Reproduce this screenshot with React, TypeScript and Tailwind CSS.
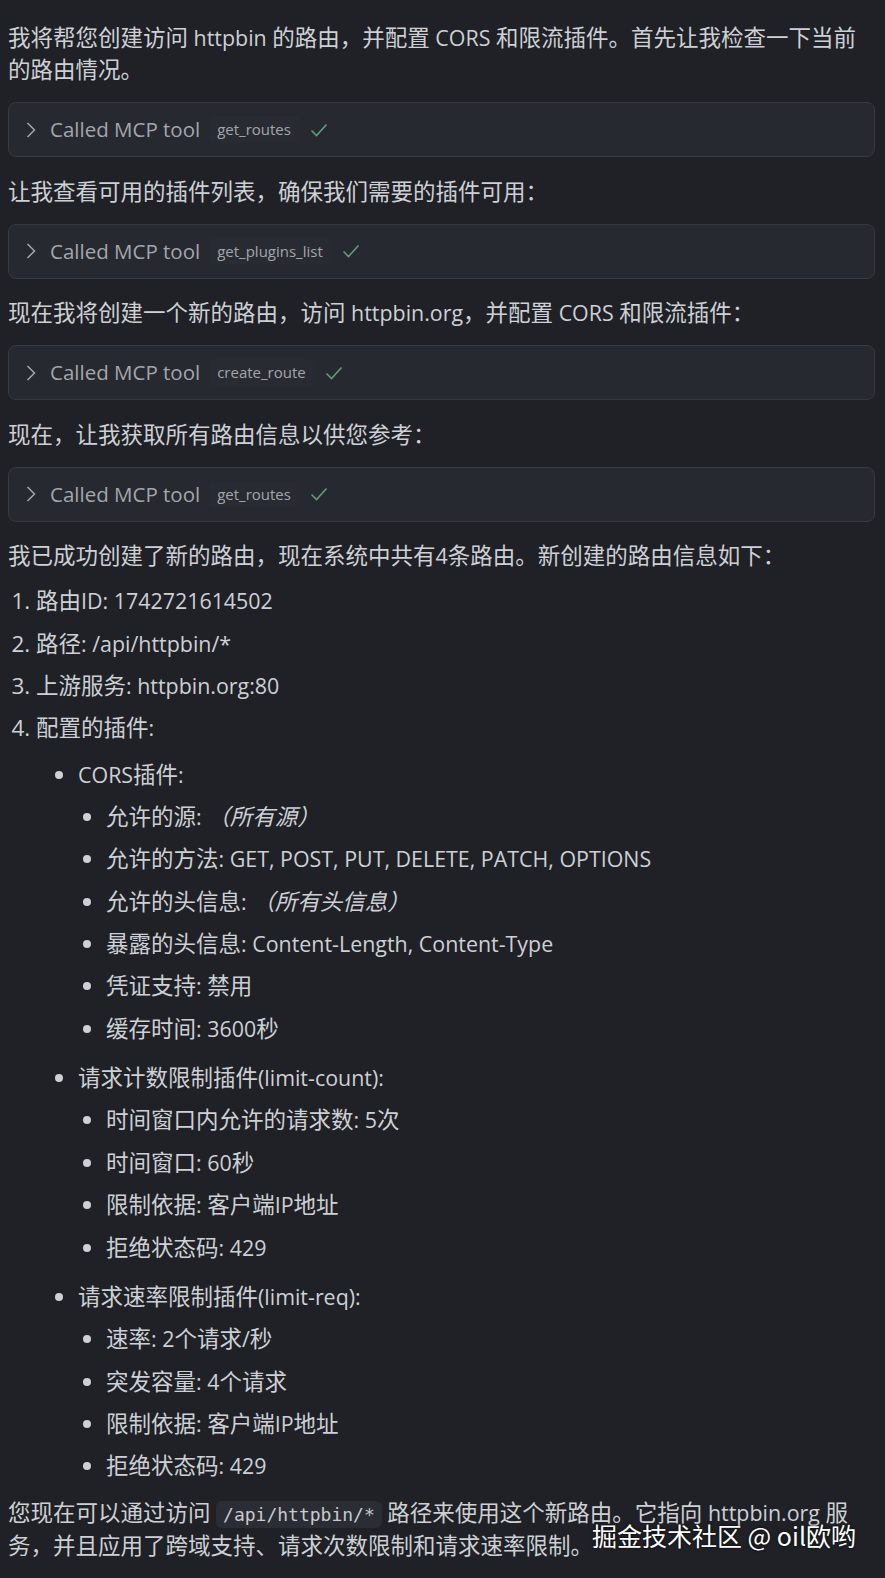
import React from "react";

const TEXT_FONT = {
  fontFamily: '"Open Sans", "Noto Sans CJK SC", sans-serif',
};

// Open Sans runs a little wider than the reference's Latin face, so Latin runs are set slightly smaller.
function mix(s: string) {
  return s.split(/([\u3000-\u303f\u4e00-\u9fff\uff00-\uffef]+)/).map((part, i) =>
    /[\u3000-\u303f\u4e00-\u9fff\uff00-\uffef]/.test(part) || part === "" ? (
      part
    ) : (
      <span key={i} className="text-[0.952em]">
        {part}
      </span>
    )
  );
}

function ToolCall({ name }: { name: string }) {
  return (
    <div className="mt-[16px] mb-[18.5px] flex h-[55px] items-center rounded-[8px] border border-[#363a42] bg-[#262930] pl-[15px]">
      <svg width="14" height="18" viewBox="0 0 14 18" className="mr-[12px]">
        <path d="M3.5 2 L10.5 9 L3.5 16" fill="none" stroke="#a3a6ab" strokeWidth="1.5" />
      </svg>
      <span className="text-[20.5px] text-[#a3a6ab]">Called MCP tool</span>
      <span className="ml-[9px] rounded-[4px] bg-[#282b32] px-[8px] py-[2px] text-[15px] text-[#a3a6ab]">
        {name}
      </span>
      <svg width="18" height="14" viewBox="0 0 18 14" className="ml-[11px]">
        <path d="M1.5 7.5 L6.5 12.5 L16.5 1.5" fill="none" stroke="#5d9c7c" strokeWidth="1.6" />
      </svg>
    </div>
  );
}

function Item({ children }: { children: React.ReactNode }) {
  return <li className="mt-[10.35px] leading-[32px]">{children}</li>;
}

export default function App() {
  return (
    <div
      className="relative min-h-[1578px] bg-[#1f2126] pt-[22px] pr-[10px] pl-[8px] text-[22.5px] text-[#cdd0d4]"
      style={TEXT_FONT}
    >
      <p className="leading-[32px]">
        {mix("我将帮您创建访问 httpbin 的路由，并配置 CORS 和限流插件。首先让我检查一下当前的路由情况。")}
      </p>
      <ToolCall name="get_routes" />
      <p className="leading-[32px]">{mix("让我查看可用的插件列表，确保我们需要的插件可用：")}</p>
      <ToolCall name="get_plugins_list" />
      <p className="leading-[32px]">
        {mix("现在我将创建一个新的路由，访问 httpbin.org，并配置 CORS 和限流插件：")}
      </p>
      <ToolCall name="create_route" />
      <p className="leading-[32px]">{mix("现在，让我获取所有路由信息以供您参考：")}</p>
      <ToolCall name="get_routes" />
      <p className="leading-[32px]">
        {mix("我已成功创建了新的路由，现在系统中共有4条路由。新创建的路由信息如下：")}
      </p>

      <ol className="list-decimal pt-[3px] pl-[28px]">
        <Item>{mix("路由ID: 1742721614502")}</Item>
        <Item>{mix("路径: /api/httpbin/*")}</Item>
        <Item>{mix("上游服务: httpbin.org:80")}</Item>
        <Item>
          {mix("配置的插件:")}
          <ul className="list-disc pt-[4px] pl-[42px]">
            <Item>
              {mix("CORS插件:")}
              <ul className="list-disc pb-[7px] pl-[28px]">
                <Item>
                  {mix("允许的源: ")}
                  <em>（所有源）</em>
                </Item>
                <Item>{mix("允许的方法: GET, POST, PUT, DELETE, PATCH, OPTIONS")}</Item>
                <Item>
                  {mix("允许的头信息: ")}
                  <em>（所有头信息）</em>
                </Item>
                <Item>{mix("暴露的头信息: Content-Length, Content-Type")}</Item>
                <Item>{mix("凭证支持: 禁用")}</Item>
                <Item>{mix("缓存时间: 3600秒")}</Item>
              </ul>
            </Item>
            <Item>
              {mix("请求计数限制插件(limit-count):")}
              <ul className="list-disc pb-[7px] pl-[28px]">
                <Item>{mix("时间窗口内允许的请求数: 5次")}</Item>
                <Item>{mix("时间窗口: 60秒")}</Item>
                <Item>{mix("限制依据: 客户端IP地址")}</Item>
                <Item>{mix("拒绝状态码: 429")}</Item>
              </ul>
            </Item>
            <Item>
              {mix("请求速率限制插件(limit-req):")}
              <ul className="list-disc pl-[28px]">
                <Item>{mix("速率: 2个请求/秒")}</Item>
                <Item>{mix("突发容量: 4个请求")}</Item>
                <Item>{mix("限制依据: 客户端IP地址")}</Item>
                <Item>{mix("拒绝状态码: 429")}</Item>
              </ul>
            </Item>
          </ul>
        </Item>
      </ol>

      <p className="mt-[15px] leading-[31px]">
        {mix("您现在可以通过访问 ")}
        <code
          className="rounded-[6px] bg-[#2a2d33] px-[7px] py-[3px] text-[18px] text-[#c8cace]"
          style={{ fontFamily: '"DejaVu Sans Mono", "Liberation Mono", monospace' }}
        >
          /api/httpbin/*
        </code>
        {mix(" 路径来使用这个新路由。它指向 httpbin.org 服务，并且应用了跨域支持、请求次数限制和请求速率限制。")}
      </p>

      <div
        className="absolute top-[1517px] left-[592px] text-[25px] leading-[36px] text-white [text-shadow:0_0_3px_rgba(0,0,0,0.9)]"
        style={{ fontFamily: '"Noto Sans CJK SC", sans-serif' }}
      >
        掘金技术社区 @ oil欧哟
      </div>
    </div>
  );
}
